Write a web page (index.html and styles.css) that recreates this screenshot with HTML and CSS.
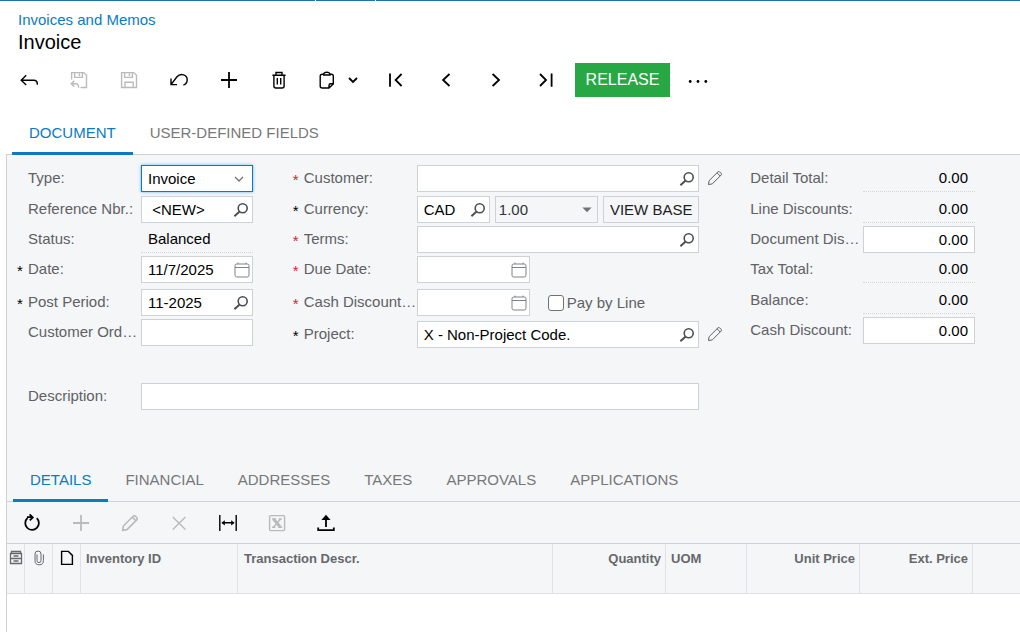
FILE: index.html
```html
<!DOCTYPE html>
<html lang="en">
<head>
    <meta charset="UTF-8">
    <meta name="viewport" content="width=device-width, initial-scale=1">
    <title>Invoice</title>
    <link rel="stylesheet" href="styles.css">
</head>
<body>
<!-- shared icons -->
<svg class="sprite" aria-hidden="true">
    <symbol id="i-search" viewBox="0 0 16 16">
        <circle cx="9.7" cy="6.2" r="4.5" stroke-width="1.6"/>
        <path d="M6.6 9.6L1.4 14.2" stroke-width="2"/>
    </symbol>
    <symbol id="i-calendar" viewBox="0 0 16 16">
        <rect x="1" y="2" width="14" height="13" rx="1.8"/>
        <path d="M1 5.5h14M4 .6v1.4M12 .6v1.4"/>
    </symbol>
    <symbol id="i-pencil" viewBox="0 0 16 16">
        <path d="M1.5 14.5l.6-3.8L11 1.8q.8-.7 1.6 0l1.6 1.6q.7.8 0 1.6L5.3 13.9z"/>
        <path d="M10 2.8l3.2 3.2"/>
    </symbol>
    <symbol id="i-plus" viewBox="0 0 18 18">
        <path d="M9 1v16M1 9h16"/>
    </symbol>
</svg>

<div class="topline"></div>

<header>
    <a class="crumb" href="#">Invoices and Memos</a>
    <h1>Invoice</h1>
</header>

<div class="toolbar">
    <button type="button" aria-label="Back"><svg viewBox="0 0 18 18"><path d="M6.2 4.3L1.2 9.2l5 4.8M1.4 9.2H14q3.4 0 3.4 4.6"/></svg></button>
    <button type="button" aria-label="Save and close" disabled><svg viewBox="0 0 18 18"><path d="M1.6 8.5V1.6h12.2l2.7 2.7v12.2H10.5M4.6 1.8v4.6h7.8V1.8M9.4 2.5v2.6M4.4 9.8L1.2 12.8l3.2 3M1.4 12.8h4.8q2.4 0 2.4 3.9"/></svg></button>
    <button type="button" aria-label="Save" disabled><svg viewBox="0 0 18 18"><path d="M1.6 1.6h12.2l2.7 2.7v12.2H1.6zM4.6 1.8v4.6h7.8V1.8M9.4 2.5v2.6M5 16.4v-5.2h8.2v5.2"/></svg></button>
    <button type="button" aria-label="Undo"><svg viewBox="0 0 18 18"><path d="M1 7.6v6h6M1.2 13.4L7 5.8C10.4 1.8 17.4 3.4 17.2 9q0 3.4-3.8 5.2"/></svg></button>
    <button type="button" aria-label="Add"><svg class="bold"><use href="#i-plus"/></svg></button>
    <button type="button" aria-label="Delete"><svg viewBox="0 0 18 18"><path d="M2.4 4.2h13.2M6 4V1.5h6V4M3.9 4.4V15q0 2 2 2h6.2q2 0 2-2V4.4M7.3 7v6.6M10.7 7v6.6"/></svg></button>
    <button type="button" class="split" aria-label="Clipboard">
        <svg viewBox="0 0 18 18"><path d="M6 3.2H4.2q-2 0-2 2V15q0 2 2 2H11l4.3-4V5.2q0-2-2-2H12M5.6 4V3.2Q6 1.2 8.8 1.2T12 3.2V4zM11 16.8v-2.4q0-1.6 1.6-1.6h2.5"/></svg>
        <svg class="small bold" viewBox="0 0 10 10"><path d="M1 3l4 4 4-4"/></svg>
    </button>
    <button type="button" aria-label="First"><svg class="bold" viewBox="0 0 18 18"><path d="M3 2.5v13.2M14.6 3l-6 6 6 6"/></svg></button>
    <button type="button" aria-label="Previous"><svg class="bold" viewBox="0 0 18 18"><path d="M12.5 3l-6.4 6 6.4 6"/></svg></button>
    <button type="button" aria-label="Next"><svg class="bold" viewBox="0 0 18 18"><path d="M5.6 3l6.4 6-6.4 6"/></svg></button>
    <button type="button" aria-label="Last"><svg class="bold" viewBox="0 0 18 18"><path d="M3 3l6 6-6 6M14.6 2.5v13.2"/></svg></button>
    <button type="button" class="release">RELEASE</button>
    <button type="button" aria-label="More"><svg class="wide" viewBox="0 0 22 18"><g fill="currentColor" stroke="none"><circle cx="3.2" cy="10.5" r="1.4"/><circle cx="11" cy="10.5" r="1.4"/><circle cx="18.8" cy="10.5" r="1.4"/></g></svg></button>
</div>

<nav class="tabs">
    <a class="active" href="#">DOCUMENT</a>
    <a href="#">USER-DEFINED FIELDS</a>
</nav>

<main class="panel">
    <form class="document">
        <div class="column">
            <div class="field">
                <label for="type">Type:</label>
                <div class="box focused">
                    <select id="type"><option>Invoice</option></select>
                    <svg class="arrow" viewBox="0 0 10 10"><path d="M1 3l4 4 4-4" stroke-width="1.3"/></svg>
                </div>
            </div>
            <div class="field">
                <label for="refnbr">Reference Nbr.:</label>
                <div class="box">
                    <input id="refnbr" type="text" value=" &lt;NEW&gt;">
                    <button type="button" aria-label="Find reference"><svg><use href="#i-search"/></svg></button>
                </div>
            </div>
            <div class="field">
                <label for="status">Status:</label>
                <output id="status" class="readonly">Balanced</output>
            </div>
            <div class="field">
                <span class="star">*</span>
                <label for="date">Date:</label>
                <div class="box">
                    <input id="date" type="text" value="11/7/2025">
                    <button type="button" class="cal" aria-label="Pick date"><svg><use href="#i-calendar"/></svg></button>
                </div>
            </div>
            <div class="field">
                <span class="star">*</span>
                <label for="period">Post Period:</label>
                <div class="box">
                    <input id="period" type="text" value="11-2025">
                    <button type="button" aria-label="Find period"><svg><use href="#i-search"/></svg></button>
                </div>
            </div>
            <div class="field">
                <label for="order">Customer Order Nbr.:</label>
                <div class="box"><input id="order" type="text"></div>
            </div>
        </div>

        <div class="column middle">
            <div class="field">
                <span class="star red">*</span>
                <label for="customer">Customer:</label>
                <div class="box">
                    <input id="customer" type="text">
                    <button type="button" aria-label="Find customer"><svg><use href="#i-search"/></svg></button>
                </div>
                <button type="button" class="edit" aria-label="Edit customer"><svg><use href="#i-pencil"/></svg></button>
            </div>
            <div class="field">
                <span class="star">*</span>
                <label for="currency">Currency:</label>
                <div class="currency">
                    <div class="box">
                        <input id="currency" type="text" value="CAD">
                        <button type="button" aria-label="Find currency"><svg><use href="#i-search"/></svg></button>
                    </div>
                    <div class="box rate">
                        <select aria-label="Rate"><option>1.00</option></select>
                        <svg class="arrow" viewBox="0 0 10 10"><path d="M.4 2.6h9.2L5 7.2z" fill="currentColor" stroke="none"/></svg>
                    </div>
                    <button type="button" class="base">VIEW BASE</button>
                </div>
            </div>
            <div class="field">
                <span class="star red">*</span>
                <label for="terms">Terms:</label>
                <div class="box">
                    <input id="terms" type="text">
                    <button type="button" aria-label="Find terms"><svg><use href="#i-search"/></svg></button>
                </div>
            </div>
            <div class="field">
                <span class="star red">*</span>
                <label for="due">Due Date:</label>
                <div class="box short">
                    <input id="due" type="text">
                    <button type="button" class="cal" aria-label="Pick due date"><svg><use href="#i-calendar"/></svg></button>
                </div>
            </div>
            <div class="field">
                <span class="star red">*</span>
                <label for="cashdate">Cash Discount Date:</label>
                <div class="pair">
                    <div class="box short">
                        <input id="cashdate" type="text">
                        <button type="button" class="cal" aria-label="Pick discount date"><svg><use href="#i-calendar"/></svg></button>
                    </div>
                    <label class="check"><input type="checkbox">Pay by Line</label>
                </div>
            </div>
            <div class="field">
                <span class="star">*</span>
                <label for="project">Project:</label>
                <div class="box">
                    <input id="project" type="text" value="X - Non-Project Code.">
                    <button type="button" aria-label="Find project"><svg><use href="#i-search"/></svg></button>
                </div>
                <button type="button" class="edit" aria-label="Edit project"><svg><use href="#i-pencil"/></svg></button>
            </div>
        </div>

        <div class="column totals">
            <div class="field">
                <label for="detail">Detail Total:</label>
                <output id="detail" class="readonly">0.00</output>
            </div>
            <div class="field">
                <label for="linedisc">Line Discounts:</label>
                <output id="linedisc" class="readonly">0.00</output>
            </div>
            <div class="field">
                <label for="docdisc">Document Discounts:</label>
                <div class="box"><input id="docdisc" type="text" value="0.00"></div>
            </div>
            <div class="field">
                <label for="tax">Tax Total:</label>
                <output id="tax" class="readonly">0.00</output>
            </div>
            <div class="field">
                <label for="balance">Balance:</label>
                <output id="balance" class="readonly">0.00</output>
            </div>
            <div class="field">
                <label for="cashdisc">Cash Discount:</label>
                <div class="box"><input id="cashdisc" type="text" value="0.00"></div>
            </div>
        </div>

        <div class="field description">
            <label for="descr">Description:</label>
            <div class="box"><input id="descr" type="text"></div>
        </div>
    </form>

    <nav class="tabs">
        <a class="active" href="#">DETAILS</a>
        <a href="#">FINANCIAL</a>
        <a href="#">ADDRESSES</a>
        <a href="#">TAXES</a>
        <a href="#">APPROVALS</a>
        <a href="#">APPLICATIONS</a>
    </nav>

    <div class="toolbar grid-tools">
        <button type="button" aria-label="Refresh"><svg class="bold" viewBox="0 0 18 18"><path d="M4.6 4A6.8 6.8 0 1 0 13.8 4.2M4 3.2h5.6M6.6.4L9.8 3.4 6.8 6.4"/></svg></button>
        <button type="button" aria-label="Add row" disabled><svg class="bold"><use href="#i-plus"/></svg></button>
        <button type="button" aria-label="Edit row" disabled><svg><use href="#i-pencil"/></svg></button>
        <button type="button" aria-label="Delete row" disabled><svg viewBox="0 0 18 18"><path d="M2.8 3l12.6 12.4M15.4 3L2.8 15.4"/></svg></button>
        <button type="button" aria-label="Fit columns"><svg viewBox="0 0 18 18"><path d="M.8 1v16M17.2 1v16M3.2 8.8h11.6"/><path d="M2.4 8.8l3.4-2.6v5.2zM15.6 8.8l-3.4-2.6v5.2z" fill="currentColor" stroke="none"/></svg></button>
        <button type="button" aria-label="Export to Excel" disabled><svg viewBox="0 0 18 18"><rect x="1.6" y="1.6" width="15" height="15" rx="1"/><path d="M5.6 5l6.6 8" stroke-width="3"/><path d="M12.6 5l-7 8M4 5h4M10.6 5h3.2M4 13.2h3.4M10.2 13.2h4"/></svg></button>
        <button type="button" aria-label="Upload"><svg class="bold" viewBox="0 0 18 18"><path d="M1.2 13.6v2.6h15.6v-2.6M9 13V4"/><path d="M9 .8l4.6 5.2H4.4z" fill="currentColor" stroke="none"/></svg></button>
    </div>

    <div class="grid">
        <table>
            <colgroup>
                <col class="c-row"><col class="c-icon"><col class="c-icon"><col class="c-item"><col class="c-descr">
                <col class="c-number"><col class="c-uom"><col class="c-number"><col class="c-number"><col>
            </colgroup>
            <thead>
                <tr>
                    <th><svg viewBox="0 0 14 16"><path d="M2.5 3.5v-2h9v2M1.5 3.5h11v5h-11zM1.5 8.5h11v5h-11z" stroke-width="1.3"/><path d="M4.5 6h5M4.5 11h5" stroke-width="1.5"/></svg></th>
                    <th><svg viewBox="0 0 14 16"><path d="M5 4.4v6.2q0 2 2 2t2-2V4q0-3-3-3T3 4v6.6q0 4.2 4.2 4.2t4.2-4.2V4.4"/></svg></th>
                    <th><svg class="note" viewBox="0 0 14 16"><path d="M1.6 1.4h6.8l4 4v9H1.6z"/></svg></th>
                    <th>Inventory ID</th>
                    <th>Transaction Descr.</th>
                    <th class="num">Quantity</th>
                    <th>UOM</th>
                    <th class="num">Unit Price</th>
                    <th class="num">Ext. Price</th>
                    <th></th>
                </tr>
            </thead>
        </table>
    </div>
</main>
</body>
</html>
```
FILE: styles.css
```css
*{
    box-sizing: border-box;
    margin: 0;
    padding: 0;
}
body{
    display: flex;
    flex-direction: column;
    min-height: 100vh;
    font-family: "Liberation Sans", Arial, sans-serif;
    font-size: 15px;
    color: #000000;
    background: #ffffff;
}
a{text-decoration: none;}
button, input, select{
    font: inherit;
    color: inherit;
    border: none;
    outline: none;
    background: none;
}
svg{
    display: block;
    fill: none;
    stroke: currentColor;
}
.sprite{
    position: absolute;
    width: 0;
    height: 0;
}

/* header */
.topline{
    height: 1px;
    background: linear-gradient(90deg, #1d74ad 315px, #ffffff 315px, #ffffff 316px, #1d74ad 316px, #1d74ad 375px, #ffffff 375px, #ffffff 376px, #1d74ad 376px);
}
header{
    padding: 9px 18px 0;
}
.crumb{
    display: block;
    line-height: 20px;
    color: #0c7bbf;
}
h1{
    font-size: 20px;
    font-weight: normal;
    line-height: 24px;
}

/* toolbars */
.toolbar{
    display: flex;
    align-items: center;
    padding: 9px 4px 0;
}
.toolbar button{
    display: flex;
    align-items: center;
    justify-content: center;
    width: 50px;
    height: 34px;
}
.toolbar svg{
    width: 18px;
    height: 18px;
    stroke-width: 1.4;
}
.toolbar svg.bold{stroke-width: 1.8;}
.toolbar svg.small{
    width: 10px;
    height: 10px;
}
.toolbar svg.wide{width: 22px;}
.toolbar button:disabled{color: #b9babc;}
.toolbar .split{
    gap: 12px;
    width: 67px;
}
.toolbar .release{
    width: 95px;
    margin: 0 3px 0 4px;
    font-size: 16px;
    color: #ffffff;
    background: #28a745;
}

/* tabs */
.tabs{
    display: flex;
    position: relative;
    padding: 16px 0 0 12px;
}
.tabs a{
    height: 42px;
    padding: 0 17px;
    line-height: 40px;
    color: #77787a;
    border-bottom: 3px solid transparent;
}
.tabs a.active{
    color: #0c7bbf;
    border-bottom-color: #0c7bbf;
}

/* document form */
.panel{
    display: flex;
    flex: 1;
    flex-direction: column;
    margin: -1px 0 0 6px;
    border-top: 1px solid #cfd2d5;
    border-left: 1px solid #cfd2d5;
    background: #f5f6f8;
}
.document{
    display: grid;
    grid-template-columns: 276fr 447fr 236fr;
    padding: 10px 45px 0 10px;
}
.column{padding-right: 40px;}
.totals{padding-right: 0;}
.field{
    display: grid;
    grid-template-columns: 11px 113px minmax(0, 1fr);
    align-items: start;
    position: relative;
    padding-bottom: 3px;
}
.field:first-child{padding-bottom: 4px;}
.field:nth-child(4){padding-bottom: 6px;}
.middle .field:nth-child(5){padding-bottom: 5px;}
.totals .field:nth-child(4){padding-bottom: 4px;}
.field > label{
    grid-column: 2;
    line-height: 26px;
    color: #5f6164;
    white-space: nowrap;
    overflow: hidden;
    text-overflow: ellipsis;
}
.star{
    padding-top: 3px;
    line-height: 24px;
}
.star.red{color: #d3222f;}
.box{
    display: flex;
    height: 27px;
    border: 1px solid #cfd2d5;
    background: #ffffff;
}
.box input, .box select{
    flex: 1;
    min-width: 0;
    width: 100%;
    padding: 0 6px;
    appearance: none;
}
.box button{
    flex: none;
    width: 24px;
    padding-left: 5px;
    color: #4c4e51;
}
.box button svg{
    width: 16px;
    height: 16px;
}
.box .cal{
    padding-left: 6px;
    color: #808285;
}
.box .arrow{
    flex: none;
    align-self: center;
    width: 10px;
    height: 10px;
    margin-right: 8px;
    color: #707275;
    pointer-events: none;
}
.focused{
    border-color: #1279bd;
    box-shadow: 0 0 3px #62b5f0;
}
.readonly{
    height: 27px;
    padding: 0 7px;
    line-height: 26px;
    border-bottom: 1px dotted #d4d6d9;
}
.short{width: 113px;}
.currency{
    display: grid;
    grid-template-columns: 73fr 103fr 96fr;
    gap: 5px;
}
.rate{
    color: #333333;
    background: #f5f6f8;
}
.box.rate select{padding: 0 3px;}
.box.rate .arrow{margin-right: 5px;}
.base{
    border: 1px solid #cfd2d5;
    color: #222222;
    white-space: nowrap;
}
.pair{
    display: flex;
    gap: 18px;
}
.check{
    display: flex;
    align-items: center;
    gap: 3px;
    color: #5f6164;
    white-space: nowrap;
}
.check input{
    appearance: none;
    width: 16px;
    height: 16px;
    border: 1px solid #707275;
    border-radius: 3px;
    background: #ffffff;
}
.check input:checked{background: #0c7bbf;}
/* pencil hangs to the right of its lookup */
.edit{
    position: absolute;
    left: 100%;
    top: 5px;
    margin-left: 8px;
    color: #5f6164;
}
.edit svg{
    width: 16px;
    height: 16px;
}
.totals input, .totals .readonly{text-align: right;}
.description{
    grid-column: 1 / 3;
    margin: 32px 40px 0 0;
}

/* details */
.panel .tabs{
    padding: 44px 0 0 6px;
    border-bottom: 1px solid #cfd2d5;
}
.panel .tabs a{margin-bottom: -1px;}
.grid-tools{
    padding: 4px 0 3px;
}
.grid-tools button{width: 49px;}
.grid{
    flex: 1;
    background: #ffffff;
}
table{
    width: 100%;
    table-layout: fixed;
    border-collapse: separate;
    border-spacing: 0;
    border-top: 1px solid #cfd2d5;
    background: #f5f6f8;
}
.c-row{width: 18px;}
.c-icon{width: 28px;}
.c-item{width: 157px;}
.c-descr{width: 315px;}
.c-number{width: 113px;}
.c-uom{width: 81px;}
th{
    height: 50px;
    padding: 6px 4px 6px 5px;
    font-size: 13px;
    line-height: 18px;
    text-align: left;
    vertical-align: top;
    color: #66686b;
    border-right: 1px solid #dfe1e5;
    border-bottom: 1px solid #dfe1e5;
}
th:nth-child(1){padding: 6px 1px;}
th:nth-child(5){padding-left: 6px;}
th:last-child{border-right: none;}
th svg{
    width: 14px;
    height: 16px;
    margin: 0 auto;
}
th .note{
    color: #000000;
    stroke-width: 1.4;
}
.num{text-align: right;}
```
